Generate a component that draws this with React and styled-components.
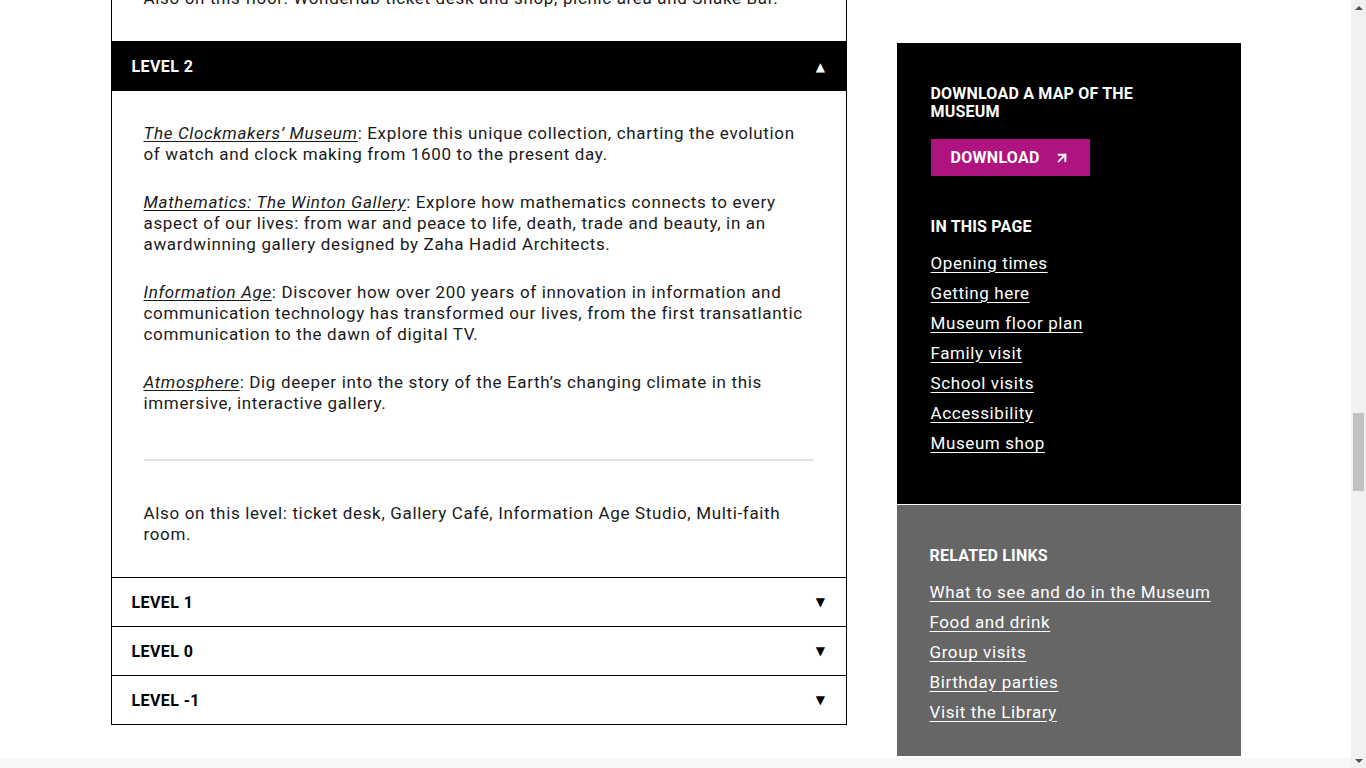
import React, { useLayoutEffect, useRef, useState } from 'react';
import styled, { createGlobalStyle } from 'styled-components';
import { ArrowUpRight } from 'lucide-react';

const GlobalStyle = createGlobalStyle`
  html, body {
    margin: 0;
    padding: 0;
    overflow: hidden;
    background: #fff;
  }
  * {
    box-sizing: border-box;
  }
`;

const Shell = styled.div`
  display: flex;
  height: 100vh;
`;

const Page = styled.div`
  flex: 1;
  height: 100%;
  overflow-y: scroll;
  scrollbar-width: none;
  font-family: Roboto, "Liberation Sans", sans-serif;
  color: #1a1a1a;

  &::-webkit-scrollbar {
    display: none;
  }
`;

const Rail = styled.div`
  width: 15px;
  flex-shrink: 0;
  display: flex;
  flex-direction: column;
  background: #f1f1f1;
`;

const RailButton = styled.div`
  height: 15px;
  display: flex;
  align-items: center;
  justify-content: center;

  &::before {
    content: '';
    border-left: 4px solid transparent;
    border-right: 4px solid transparent;
    ${(p) => (p.$down ? 'border-top: 4px solid #505050;' : 'border-bottom: 4px solid #505050;')}
  }
`;

const Track = styled.div`
  flex: 1;
  padding: 0 2px;
`;

const Thumb = styled.div`
  background: #c1c1c1;
`;

const Hero = styled.header`
  padding: 80px 110px 0;
  min-height: 3440px;
`;

const HeroTitle = styled.h1`
  font-size: 48px;
  font-weight: 700;
  text-transform: uppercase;
  margin: 0 0 24px;
`;

const HeroText = styled.p`
  font-size: 17px;
  line-height: 21px;
  letter-spacing: 0.65px;
  max-width: 736px;
  margin: 0 0 27px;
`;

const Layout = styled.div`
  max-width: 1130px;
  margin: 0 auto;
  display: grid;
  grid-template-columns: 736px 344px;
  column-gap: 50px;
`;

const Main = styled.main`
  padding: 40px 0 33px;
`;

const SectionTitle = styled.h2`
  font-size: 32px;
  font-weight: 700;
  text-transform: uppercase;
  margin: 0 0 24px;
`;

const Intro = styled.p`
  font-size: 17px;
  line-height: 21px;
  letter-spacing: 0.65px;
  margin: 0 0 40px;
`;

const Accordion = styled.div`
  border: 1px solid #000;
  border-top: none;
`;

const Item = styled.section`
  border-top: 1px solid #000;
`;

const Header = styled.button`
  display: flex;
  align-items: center;
  justify-content: space-between;
  width: 100%;
  height: ${(p) => (p.$open ? 49 : 48)}px;
  padding: 0 20px;
  border: none;
  margin: 0;
  background: ${(p) => (p.$open ? '#000' : '#fff')};
  color: ${(p) => (p.$open ? '#fff' : '#000')};
  font-family: Roboto, "Liberation Sans", sans-serif;
  font-size: 16px;
  font-weight: 700;
  letter-spacing: 0.4px;
  text-transform: uppercase;
  cursor: pointer;
`;

const Caret = styled.span`
  font-family: "DejaVu Sans", sans-serif;
  font-size: 12px;
  line-height: 1;
`;

const Panel = styled.div`
  padding: 32px;
`;

const Para = styled.p`
  font-size: 17px;
  line-height: 21px;
  letter-spacing: 0.65px;
  margin: 0 0 27px;
  &:last-child {
    margin-bottom: 0;
  }
`;

const GalleryLink = styled.a`
  color: inherit;
  font-style: italic;
  text-decoration: underline;
  text-underline-offset: 2px;
`;

const Rule = styled.hr`
  border: none;
  height: 2px;
  background: #e4e4e4;
  margin: 45px 0 42px;
`;

const Aside = styled.aside`
  position: sticky;
  top: 43px;
  align-self: start;
  margin-top: 43px;
`;

const Block = styled.div`
  background: ${(p) => p.$bg};
  color: #fff;
  padding: ${(p) => p.$pad};
  border-top: ${(p) => (p.$divider ? '1px solid #fff' : 'none')};
`;

const BlockTitle = styled.h2`
  font-family: Roboto, "Liberation Sans", sans-serif;
  font-size: 16px;
  line-height: 18px;
  font-weight: 700;
  letter-spacing: 0.2px;
  text-transform: uppercase;
  max-width: 240px;
  margin: 0 0 ${(p) => p.$gap || 18}px;
`;

const DownloadButton = styled.a`
  display: inline-flex;
  align-items: center;
  gap: 14px;
  height: 37px;
  padding: 0 20px;
  background: #ae1380;
  color: #fff;
  font-size: 16px;
  font-weight: 700;
  letter-spacing: 0.3px;
  text-transform: uppercase;
  text-decoration: none;
  margin-bottom: 42px;
`;

const LinkList = styled.ul`
  list-style: none;
  margin: 0;
  padding: 0;
  display: flex;
  flex-direction: column;
  gap: 9px;
`;

const SideLink = styled.a`
  color: #fff;
  font-size: 17px;
  line-height: 21px;
  letter-spacing: 0.6px;
  white-space: nowrap;
  text-decoration: underline;
  text-underline-offset: 3px;
`;

const Footer = styled.footer`
  background: #f7f7f7;
  min-height: 2570px;
`;

const level2 = [
  {
    name: 'The Clockmakers\u2019 Museum',
    text: ': Explore this unique collection, charting the evolution of watch and clock making from 1600 to the present day.',
  },
  {
    name: 'Mathematics: The Winton Gallery',
    text: ': Explore how mathematics connects to every aspect of our lives: from war and peace to life, death, trade and beauty, in an awardwinning gallery designed by Zaha Hadid Architects.',
  },
  {
    name: 'Information Age',
    text: ': Discover how over 200 years of innovation in information and communication technology has transformed our lives, from the first transatlantic communication to the dawn of digital TV.',
  },
  {
    name: 'Atmosphere',
    text: ': Dig deeper into the story of the Earth\u2019s changing climate in this immersive, interactive gallery.',
  },
];

const inThisPage = [
  'Opening times',
  'Getting here',
  'Museum floor plan',
  'Family visit',
  'School visits',
  'Accessibility',
  'Museum shop',
];

const related = [
  'What to see and do in the Museum',
  'Food and drink',
  'Group visits',
  'Birthday parties',
  'Visit the Library',
];

const closedLevels = ['Level 1', 'Level 0', 'Level -1'];

const App = () => {
  const pageRef = useRef(null);
  const level2Ref = useRef(null);
  const [thumb, setThumb] = useState({ top: 0, height: 0 });

  // page is shown scrolled down to the level 2 panel
  useLayoutEffect(() => {
    const page = pageRef.current;
    const target = level2Ref.current;
    if (!page || !target) return;
    const offset = target.getBoundingClientRect().top - page.getBoundingClientRect().top;
    page.scrollTop = page.scrollTop + offset - 41;
    const track = page.clientHeight - 30;
    setThumb({
      top: (track * page.scrollTop) / page.scrollHeight,
      height: (track * page.clientHeight) / page.scrollHeight,
    });
  }, []);

  return (
    <>
      <GlobalStyle />
      <Shell>
        <Page ref={pageRef}>
          <Hero>
            <HeroTitle>Plan your visit</HeroTitle>
            <HeroText>The Science Museum is open daily from 10.00 to 18.00. Entry is free, but we recommend booking a ticket in advance.</HeroText>
            <HeroText>The Museum is on Exhibition Road in South Kensington. The nearest Underground station is South Kensington.</HeroText>
          </Hero>
          <Layout>
            <Main>
              <SectionTitle>Museum floor plan</SectionTitle>
              <Intro>Find your way around the Science Museum with our level-by-level guide to galleries and facilities.</Intro>
              <Accordion>
                <Item>
                  <Header $open>
                    Level 3
                    <Caret>▲</Caret>
                  </Header>
                  <Panel>
                    <Para>
                      <GalleryLink href="#">Wonderlab: The Equinor Gallery</GalleryLink>: Get hands-on with science in our interactive gallery, packed with more than 50 exhibits and live shows.
                    </Para>
                    <Para>
                      <GalleryLink href="#">Flight</GalleryLink>: Discover the people and aircraft that made the dream of flight a reality.
                    </Para>
                    <Rule />
                    <Para>Also on this floor: Wonderlab ticket desk and shop, picnic area and Shake Bar.</Para>
                  </Panel>
                </Item>
                <Item ref={level2Ref}>
                  <Header $open>
                    Level 2
                    <Caret>▲</Caret>
                  </Header>
                  <Panel>
                    {level2.map((g) => (
                      <Para key={g.name}>
                        <GalleryLink href="#">{g.name}</GalleryLink>
                        {g.text}
                      </Para>
                    ))}
                    <Rule />
                    <Para>Also on this level: ticket desk, Gallery Café, Information Age Studio, Multi-faith room.</Para>
                  </Panel>
                </Item>
                {closedLevels.map((l) => (
                  <Item key={l}>
                    <Header>
                      {l}
                      <Caret>▼</Caret>
                    </Header>
                  </Item>
                ))}
              </Accordion>
            </Main>

            <Aside>
              <Block $bg="#000" $pad="42px 33px 50px 34px">
                <BlockTitle $gap={18}>Download a map of the Museum</BlockTitle>
                <DownloadButton href="#">
                  Download
                  <ArrowUpRight size={16} strokeWidth={3} />
                </DownloadButton>
                <BlockTitle $gap={17}>In this page</BlockTitle>
                <LinkList>
                  {inThisPage.map((l) => (
                    <li key={l}>
                      <SideLink href="#">{l}</SideLink>
                    </li>
                  ))}
                </LinkList>
              </Block>
              <Block $bg="#666" $pad="42px 32px 33px 33px" $divider>
                <BlockTitle $gap={17}>Related links</BlockTitle>
                <LinkList>
                  {related.map((l) => (
                    <li key={l}>
                      <SideLink href="#">{l}</SideLink>
                    </li>
                  ))}
                </LinkList>
              </Block>
            </Aside>
          </Layout>
          <Footer />
        </Page>
        <Rail>
          <RailButton />
          <Track>
            <Thumb style={{ marginTop: thumb.top, height: thumb.height }} />
          </Track>
          <RailButton $down />
        </Rail>
      </Shell>
    </>
  );
};

export default App;
